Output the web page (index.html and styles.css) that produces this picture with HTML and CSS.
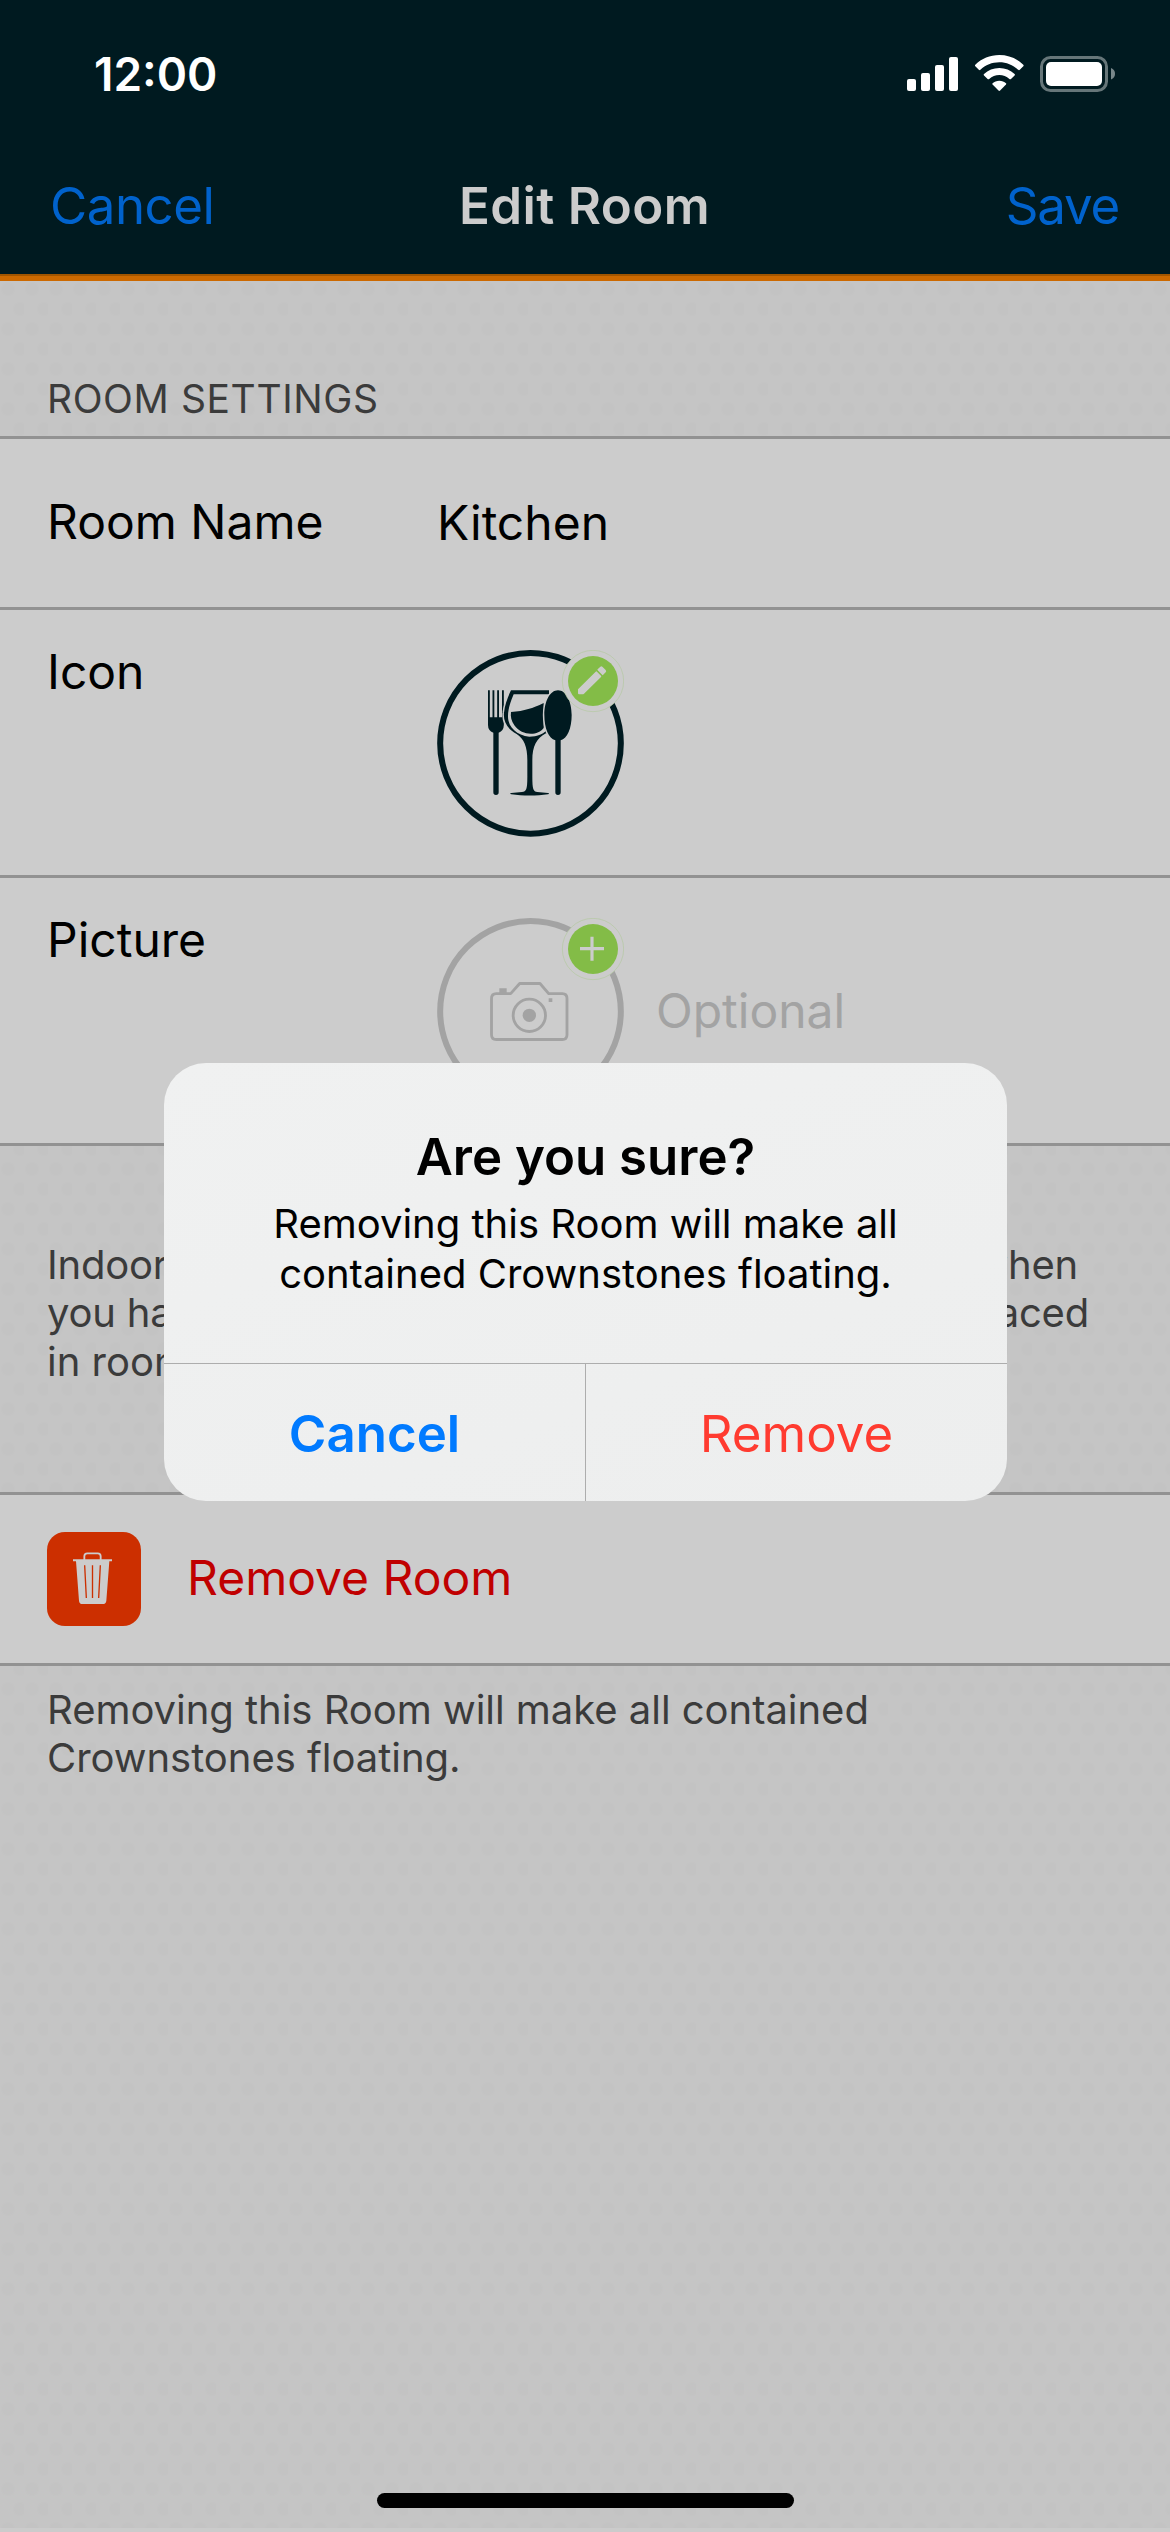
FILE: index.html
```
<!DOCTYPE html>
<html lang="en">
<head>
<meta charset="utf-8">
<title>Edit Room</title>
<link rel="stylesheet" href="styles.css">
</head>
<body>
<div class="screen">
  <header class="header">
    <div class="status-bar">
      <span class="clock">12:00</span>
      <div class="status-icons">
        <svg width="51" height="37" viewBox="0 0 51 37" fill="#fff">
          <rect x="0" y="24" width="9" height="12" rx="2"/>
          <rect x="14" y="18" width="9" height="18" rx="2"/>
          <rect x="28" y="10" width="9" height="26" rx="2"/>
          <rect x="42" y="2" width="9" height="34" rx="2"/>
        </svg>
        <svg width="49" height="37" viewBox="0 0 49 37" fill="#fff">
          <path d="M24.3 0C33.5 0 42 3.500 48.300 9.700Q49 10.500 48.300 11.300L44.800 14.800Q44 15.500 43.200 14.800C38 9.900 31.500 7.200 24.300 7.200C17 7.200 10.500 9.900 5.400 14.800Q4.600 15.500 3.800 14.800L.3 11.300Q-.4 10.500 .3 9.700C6.600 3.500 15 0 24.300 0Z"/>
          <path d="M24.300 13C30.200 13 35.500 15.200 39.600 18.900Q40.400 19.600 39.600 20.400L36 23.900Q35.200 24.600 34.400 23.900C31.600 21.400 28.100 20 24.300 20C20.500 20 17 21.400 14.200 23.900Q13.400 24.600 12.600 23.900L9 20.400Q8.200 19.600 9 18.900C13.100 15.200 18.400 13 24.300 13Z"/>
          <path d="M24.300 25.800C27 25.800 29.300 26.700 31 28.200Q31.600 28.800 31 29.500L25.100 35.500Q24.300 36.300 23.500 35.500L17.600 29.500Q17 28.800 17.600 28.200C19.300 26.700 21.600 25.800 24.300 25.800Z"/>
        </svg>
        <svg width="75" height="37" viewBox="0 0 75 37">
          <rect x="1.500" y="2.500" width="65" height="33" rx="9" fill="none" stroke="#667679" stroke-width="3"/>
          <rect x="6" y="7" width="56" height="24" rx="5" fill="#fff"/>
          <path d="M71 13Q75 14.500 75 18.800Q75 23 71 24.500Z" fill="#78878a"/>
        </svg>
      </div>
    </div>
    <nav class="nav-bar">
      <a class="nav-action">Cancel</a>
      <h1 class="nav-title">Edit Room</h1>
      <a class="nav-action nav-save">Save</a>
    </nav>
  </header>

  <main class="content">
    <h2 class="section-title">ROOM SETTINGS</h2>
    <section class="group">
      <div class="row row-name">
        <span class="label">Room Name</span>
        <span class="value">Kitchen</span>
      </div>
      <div class="row row-tall">
        <span class="label">Icon</span>
        <svg width="187" height="187" viewBox="51 60 561 561">
          <circle cx="331.500" cy="340" r="271" fill="none" stroke="#001a20" stroke-width="18"/>
          <g fill="#001a20">
            <path d="M204 181H209.500V262H217.500V181H223V262H231.500V181H237V262H246V181H251.500V285Q251 303 236 308V487Q236 495 228 495Q220 495 220 487V308Q204 302 204 285Z"/>
            <path d="M273 181H387V310H378C350 324 337 350 337 390V440C337 478 340 484 352 486L384 489Q390 491 384 493C350 498 308 498 274 493Q267 491 274 489L306 486C319 484 322 478 322 440V390C322 350 312 326 290 312C262 297 249 274 252 248C254 225 264 200 273 181Z" stroke="#ccc" stroke-width="9" paint-order="stroke"/>
          </g>
          <path d="M281 192.500H387V290C376 312 350 320 328 320C290 316 263 290 264 258C264 235 273 212 281 192.500Z" fill="#ccc"/>
          <path d="M273 246C315 243 337 235 371 219V294C354 318 306 319 283 286C274 273 271 260 273 246Z" fill="#001a20"/>
          <path d="M414 181C438 181 455 214 455 255C455 295 442 326 422 331V487Q422 495 414 495Q406 495 406 487V331C386 326 373 295 373 255C373 214 390 181 414 181Z" fill="#001a20" stroke="#ccc" stroke-width="9" paint-order="stroke"/>
          <circle cx="519" cy="153" r="92" fill="#ccc" stroke="#b4c8a0" stroke-width="2"/>
          <circle cx="519" cy="153" r="75" fill="#83bc47"/>
          <path d="M474 178L527 125Q529 123 531 125L543 137Q545 139 543 141L492 191Q490 193 487 193H477Q474 193 474 190ZM533 118L541 110Q544 107 547 110L557 120Q560 124 557 127L549 135Q548 136 547 135L533 121Q531 120 533 118Z" fill="#ccc"/>
        </svg>
      </div>
      <div class="row row-tall">
        <span class="label">Picture</span>
        <svg width="187" height="187" viewBox="51 54 561 561">
          <circle cx="331.500" cy="334" r="271" fill="none" stroke="#a3a3a3" stroke-width="18"/>
          <g fill="none" stroke="#a3a3a3" stroke-width="8.500" stroke-linejoin="round">
            <path d="M214.500 296Q214.500 281 229 281H272L299 250.500H360L386 281H427Q441 281 441 296V404Q441 418.500 427 418.500H229Q214.500 418.500 214.500 404Z"/>
            <circle cx="328" cy="346" r="48.500"/>
          </g>
          <path d="M238 265H260V280H238ZM386 295H397V306H386Z" fill="#a3a3a3"/>
          <circle cx="328" cy="346" r="20" fill="#a3a3a3"/>
          <circle cx="519" cy="147" r="92" fill="#ccc" stroke="#b4c8a0" stroke-width="2"/>
          <circle cx="519" cy="147" r="75" fill="#83bc47"/>
          <path d="M480 146H552M516 110V182" stroke="#ccc" stroke-width="9.500"/>
        </svg>
        <span class="optional">Optional</span>
      </div>
    </section>

    <div class="explanation">
      <p class="split-line"><span>Indoor localization</span><span>works when</span></p>
      <p class="split-line split-wide"><span>you have enough</span><span>Crownstones placed</span></p>
      <p>in rooms.</p>
    </div>

    <section class="group">
      <div class="row row-remove">
        <svg width="94" height="94" viewBox="51 155 282 282">
          <rect x="51" y="155" width="282" height="282" rx="54" fill="#cc2f00"/>
          <path d="M163 239V228Q163 219 172 219H203Q212 219 212 228V239" fill="none" stroke="#ccc" stroke-width="5.500"/>
          <path d="M129 237H246V243H238L229 361Q228 371 218 371H157Q148 371 147 361L138 243H129Z" fill="#ccc"/>
          <path d="M164 255L169 353M187.500 255V353M211 255L206 353" stroke="#cc2f00" stroke-width="4"/>
        </svg>
        <span class="remove-label">Remove Room</span>
      </div>
    </section>
    <p class="footnote">Removing this Room will make all contained Crownstones floating.</p>
  </main>

  <div class="alert-layer">
    <div class="alert">
      <div class="alert-body">
        <h3 class="alert-title">Are you sure?</h3>
        <p class="alert-text">Removing this Room will make all contained Crownstones floating.</p>
      </div>
      <div class="alert-actions">
        <a class="alert-button alert-cancel">Cancel</a>
        <a class="alert-button alert-remove">Remove</a>
      </div>
    </div>
  </div>
  <div class="home-indicator"></div>
</div>
</body>
</html>
```
FILE: styles.css
```
* { box-sizing: border-box; margin: 0; padding: 0; }

body {
  width: 1170px;
  height: 2532px;
  overflow: hidden;
  font-family: "Inter", "Liberation Sans", sans-serif;
}

svg { display: block; flex: none; }

.screen {
  position: relative;
  display: flex;
  flex-direction: column;
  height: 2532px;
  background: #c5c5c5;
  border-bottom: 4px solid #cbcbcb;
}

/* Header */
.header {
  height: 281px;
  background: #001a20;
  border-bottom: 5px solid #cc6900;
  box-shadow: inset 0 -2px #a15500;
}

.status-bar {
  display: flex;
  justify-content: space-between;
  height: 149px;
  padding: 0 55px 0 94px;
}

.clock {
  font-size: 46px;
  font-weight: 600;
  line-height: 149px;
  color: #fff;
}

.status-icons {
  display: flex;
  gap: 17px;
  padding-top: 55px;
}
.status-icons svg:nth-child(2) { margin-right: -1px; }

.nav-bar {
  display: grid;
  grid-template-columns: 1fr auto 1fr;
  height: 115px;
  padding: 0 51px 0 50px;
  line-height: 113px;
}

.nav-action {
  font-size: 51px;
  letter-spacing: -0.5px;
  color: #0062cc;
}

.nav-save { text-align: right; letter-spacing: -1.2px; }

.nav-title {
  font-size: 51px;
  font-weight: 600;
  letter-spacing: 0.4px;
  color: #ccc;
}

/* Settings list */
.content {
  flex: 1;
  background-image:
    radial-gradient(circle at 8px 8px, rgba(0, 0, 0, 0.008) 5px, transparent 8px),
    radial-gradient(circle at 20px 28px, rgba(0, 0, 0, 0.008) 5px, transparent 8px);
  background-size: 24px 40px;
}

.section-title {
  height: 155px;
  padding: 94px 0 0 47px;
  font-size: 39px;
  font-weight: 400;
  line-height: 48px;
  letter-spacing: 0.6px;
  color: #3b3b3b;
}

.group {
  background: #ccc;
  border-top: 3px solid #929292;
}

.row {
  display: flex;
  padding-left: 47px;
  border-bottom: 3px solid #929292;
  font-size: 48px;
  line-height: 60px;
  color: #000;
}

.row-name { height: 171px; padding-top: 53px; }
.row-tall { height: 268px; padding-top: 40px; }
.row-tall .label { margin-top: -8px; }

.label { width: 390px; letter-spacing: 0; }
.value { padding-top: 1px; letter-spacing: 0; }

.optional {
  padding-left: 32px;
  line-height: 185px;
  color: #a3a3a3;
}

.explanation {
  height: 346px;
  padding: 95px 0 0 47px;
  font-size: 40px;
  line-height: 48.4px;
  color: #3b3b3b;
}

.split-line {
  display: flex;
  justify-content: space-between;
  width: 1031px;
  letter-spacing: -0.2px;
}

.split-wide { width: 1042px; }

.row-remove {
  align-items: center;
  gap: 46px;
  height: 171px;
}

.remove-label { margin-top: -2px; color: #c00000; }

.footnote {
  width: 960px;
  padding: 20px 0 0 47px;
  font-size: 40px;
  line-height: 48px;
  letter-spacing: -0.03px;
  color: #3b3b3b;
}

/* Confirmation dialog */
.alert-layer {
  position: absolute;
  inset: 0;
  display: flex;
  justify-content: center;
  align-items: flex-start;
  padding-top: 1063px;
}

.alert {
  width: 843px;
  height: 438px;
  margin-left: 1px;
  overflow: hidden;
  border-radius: 42px;
  background: linear-gradient(160deg, #f0f1f1, #edeeee);
  text-align: center;
}

.alert-body { height: 300px; padding: 62px 90px 0; }

.alert-title {
  font-size: 51px;
  font-weight: 600;
  line-height: 64px;
  color: #000;
}

.alert-text {
  padding-top: 10px;
  font-size: 40px;
  line-height: 50px;
  color: #000;
}

.alert-actions {
  display: flex;
  height: 138px;
  border-top: 1px solid #adadad;
}

.alert-button {
  flex: 1;
  font-size: 51px;
  line-height: 140px;
}

.alert-cancel { font-weight: 600; color: #007aff; }
.alert-remove { border-left: 1px solid #adadad; color: #ff3b30; }

.home-indicator {
  position: absolute;
  left: 377px;
  bottom: 20px;
  width: 417px;
  height: 15px;
  border-radius: 8px;
  background: #000;
}
```
